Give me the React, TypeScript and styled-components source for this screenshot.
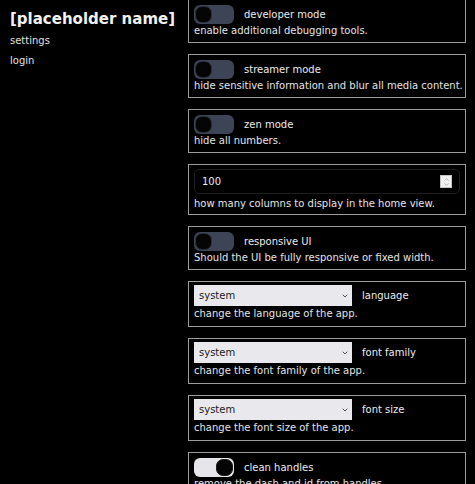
import React from 'react';
import styled, { createGlobalStyle } from 'styled-components';
import { ChevronDown, ChevronUp } from 'lucide-react';

const GlobalStyle = createGlobalStyle`
  html, body {
    margin: 0;
    padding: 0;
    background: #000;
    color: #e8e8e8;
    font-family: "DejaVu Sans", Verdana, sans-serif;
    font-size: 10px;
  }
`;

// --- Layout ---

const Page = styled.div`
  display: grid;
  grid-template-columns: 188px 278px;
  align-items: start;
`;

const Sidebar = styled.nav`
  display: flex;
  flex-direction: column;
  padding: 9px 10px;
`;

const Title = styled.h1`
  margin: 0 0 2px;
  font-size: 15px;
  line-height: 20px;
  font-weight: bold;
  color: #f2f2f2;
`;

const NavLink = styled.a`
  font-size: 10px;
  line-height: 20px;
  color: #e0e0e0;
  text-decoration: none;
`;

const SettingsList = styled.div`
  display: flex;
  flex-direction: column;
  gap: 11px;
  margin-top: -1px;
`;

type Kind = 'toggle' | 'select' | 'number';

const Card = styled.section<{ $kind: Kind }>`
  border: 1px solid #9c9c9c;
  padding: ${(p) => (p.$kind === 'select' ? '3px 5px 5px' : p.$kind === 'number' ? '4px 5px 3px' : '4px 5px')};
  display: flex;
  flex-direction: column;
`;

const Row = styled.div`
  display: flex;
  align-items: center;
  gap: 10px;
  min-height: 20px;
`;

const Label = styled.span`
  font-size: 10px;
  color: #ececec;
`;

const Description = styled.p<{ $gap?: number }>`
  margin: ${(p) => p.$gap ?? 0}px 0 0;
  font-size: 10px;
  line-height: 14px;
  color: #e4e4e4;
  white-space: nowrap;
`;

// --- Toggle ---

const ToggleTrack = styled.button<{ $on?: boolean }>`
  width: 40px;
  height: 19px;
  border: none;
  border-radius: 6px;
  padding: 1px;
  display: flex;
  justify-content: ${(p) => (p.$on ? 'flex-end' : 'flex-start')};
  align-items: center;
  background: ${(p) => (p.$on ? '#e6e6ea' : '#3c4456')};
  cursor: pointer;
`;

const ToggleKnob = styled.span<{ $on?: boolean }>`
  width: 17px;
  height: 17px;
  border-radius: 7px;
  background: #050505;
  box-sizing: border-box;
  border: 1px solid ${(p) => (p.$on ? '#1a1a1a' : '#2a2f3a')};
`;

const Toggle = ({ on }: { on?: boolean }) => (
  <ToggleTrack $on={on} type="button">
    <ToggleKnob $on={on} />
  </ToggleTrack>
);

// --- Number input ---

const NumberWrap = styled.div`
  position: relative;
`;

const NumberInput = styled.input`
  width: 100%;
  box-sizing: border-box;
  height: 25px;
  background: #000;
  color: #eaeaea;
  border: 1px solid #1e1e1e;
  border-radius: 5px;
  padding: 0 7px;
  font-family: inherit;
  font-size: 10px;
  appearance: textfield;
  outline: none;

  &::-webkit-inner-spin-button,
  &::-webkit-outer-spin-button {
    -webkit-appearance: none;
    margin: 0;
  }
`;

const Spinner = styled.span`
  position: absolute;
  right: 8px;
  top: 6px;
  width: 12px;
  height: 13px;
  background: #f1f1f1;
  border: 1px solid #c4c4c4;
  box-sizing: border-box;
  display: flex;
  flex-direction: column;
  align-items: center;
  justify-content: center;
  color: #8a8a8a;
  pointer-events: none;

  svg {
    display: block;
    margin: -1px 0;
  }
`;

// --- Select ---

const SelectWrap = styled.div`
  position: relative;
  width: 158px;
  height: 21px;
`;

const NativeSelect = styled.select`
  width: 100%;
  height: 100%;
  appearance: none;
  border: none;
  border-radius: 0;
  background: #e8e8ed;
  color: #1a1a1a;
  font-family: inherit;
  font-size: 10px;
  padding: 0 5px;
  outline: none;
`;

const SelectChevron = styled.span`
  position: absolute;
  right: 3px;
  top: 0;
  bottom: 0;
  display: flex;
  align-items: center;
  color: #333;
  pointer-events: none;
`;

const SelectBox = ({ value }: { value: string }) => (
  <SelectWrap>
    <NativeSelect defaultValue={value}>
      <option value="system">system</option>
    </NativeSelect>
    <SelectChevron>
      <ChevronDown size={8} strokeWidth={2.5} />
    </SelectChevron>
  </SelectWrap>
);

// --- Data ---

type Setting =
  | { kind: 'toggle'; label: string; desc: string; on?: boolean }
  | { kind: 'select'; label: string; desc: string }
  | { kind: 'number'; value: number; desc: string };

const settings: Setting[] = [
  { kind: 'toggle', label: 'developer mode', desc: 'enable additional debugging tools.' },
  { kind: 'toggle', label: 'streamer mode', desc: 'hide sensitive information and blur all media content.' },
  { kind: 'toggle', label: 'zen mode', desc: 'hide all numbers.' },
  { kind: 'number', value: 100, desc: 'how many columns to display in the home view.' },
  { kind: 'toggle', label: 'responsive UI', desc: 'Should the UI be fully responsive or fixed width.' },
  { kind: 'select', label: 'language', desc: 'change the language of the app.' },
  { kind: 'select', label: 'font family', desc: 'change the font family of the app.' },
  { kind: 'select', label: 'font size', desc: 'change the font size of the app.' },
  { kind: 'toggle', label: 'clean handles', desc: 'remove the dash and id from handles.', on: true },
];

export default function App() {
  return (
    <>
      <GlobalStyle />
      <Page>
        <Sidebar>
          <Title>[placeholder name]</Title>
          <NavLink href="#">settings</NavLink>
          <NavLink href="#">login</NavLink>
        </Sidebar>
        <SettingsList>
          {settings.map((s, i) => (
            <Card key={i} $kind={s.kind}>
              {s.kind === 'toggle' && (
                <Row>
                  <Toggle on={s.on} />
                  <Label>{s.label}</Label>
                </Row>
              )}
              {s.kind === 'select' && (
                <Row>
                  <SelectBox value="system" />
                  <Label>{s.label}</Label>
                </Row>
              )}
              {s.kind === 'number' && (
                <NumberWrap>
                  <NumberInput type="number" defaultValue={s.value} />
                  <Spinner>
                    <ChevronUp size={7} strokeWidth={2} />
                    <ChevronDown size={7} strokeWidth={2} />
                  </Spinner>
                </NumberWrap>
              )}
              <Description $gap={s.kind === 'select' ? 1 : s.kind === 'number' ? 3 : 0}>{s.desc}</Description>
            </Card>
          ))}
        </SettingsList>
      </Page>
    </>
  );
}
